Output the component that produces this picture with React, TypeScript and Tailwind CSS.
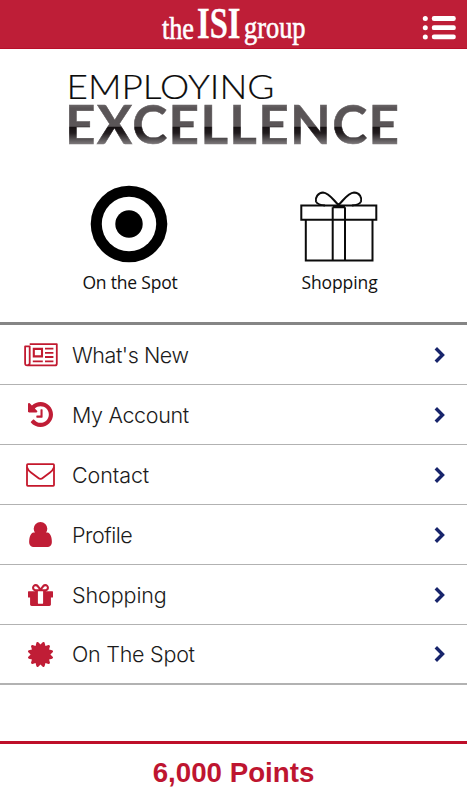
import React from 'react';

type GlyphProps = { box: string; className: string; d: string };

const Glyph = ({ box, className, d }: GlyphProps) => (
  <svg viewBox={box} className={className} fill="#c01d36">
    <path d={d} />
  </svg>
);

const NewsIcon = () => (
  <svg viewBox="0 0 34 24" className="h-6 w-[34px]" fill="none" stroke="#c11a30" strokeLinejoin="round">
    <path strokeWidth="1.8" d="M5.700 1.200H32.800V20.400Q32.800 22.400 31 22.400H3.200Q1.100 22.400 1.100 20.300V3.400H5.700V20Q5.700 22.200 3.400 22.200" />
    <path strokeWidth="2.1" strokeLinejoin="miter" d="M9.800 5.900H18V13.400H9.800Z" />
    <path strokeWidth="1.8" d="M21 5.700H29.400M21 9.900H29.400M21 14H29.400M8.800 18.300H18.800M21 18.300H29.400" />
  </svg>
);

const MailIcon = () => (
  <svg viewBox="0 0 29 24" className="h-6 w-[29px]" fill="none" stroke="#c5182c" strokeWidth="1.8" strokeLinejoin="round">
    <rect x="1" y="1.200" width="27" height="21.700" rx="0.8" />
    <path d="M1 4.200Q2.200 7.400 5 9.500L12 14.800Q14.500 17 17 14.800L24 9.500Q26.800 7.400 28 4.200" />
  </svg>
);

const HISTORY =
  'M1536 896q0 156-61 298t-164 245-245 164-298 61q-172 0-327-72.500t-264-204.500q-7-10-6.500-22.500t8.500-20.500l137-138q10-9 25-9 16 2 23 12 73 95 179 147t225 52q104 0 198.500-40.500t163.500-109.500 109.500-163.500 40.500-198.500-40.500-198.500-109.500-163.500-163.500-109.500-198.500-40.500q-98 0-188 35.500t-160 101.500l137 138q31 30 14 69-17 40-59 40h-448q-26 0-45-19t-19-45v-448q0-42 40-59 39-17 69 14l130 129q107-101 244.500-156.500t284.500-55.500q156 0 298 61t245 164 164 245 61 298zM896 608v448q0 14-9 23t-23 9h-320q-14 0-23-9t-9-23v-64q0-14 9-23t23-9h224v-352q0-14 9-23t23-9h64q14 0 23 9t9 23z';
const USER =
  'M1280 1271q0 109-62.500 187t-150.500 78h-854q-88 0-150.500-78t-62.500-187q0-85 8.500-160.500t31.500-152 58.500-131 94-89 134.500-34.500q131 128 313 128t313-128q76 0 134.500 34.500t94 89 58.500 131 31.500 152 8.500 160.500zM1024 512q0 159-112.500 271.500t-271.500 112.500-271.500-112.500-112.500-271.500 112.500-271.500 271.500-112.500 271.500 112.500 112.500 271.500z';
const GIFT =
  'M928 1356v-716h-320v716q0 25 18 38.500t46 13.500h192q28 0 46-13.500t18-38.500zM472 512h195l-126-161q-26-31-69-31-40 0-68 28t-28 68 28 68 68 28zM1160 416q0-40-28-68t-68-28q-43 0-69 31l-125 161h194q40 0 68-28t28-68zM1536 672v320q0 14-9 23t-23 9h-96v416q0 40-28 68t-68 28h-1088q-40 0-68-28t-28-68v-416h-96q-14 0-23-9t-9-23v-320q0-14 9-23t23-9h440q-93 0-158.500-65.500t-65.500-158.500 65.500-158.500 158.500-65.500q107 0 168 77l128 165 128-165q61-77 168-77 93 0 158.500 65.500t65.500 158.500-65.500 158.500-158.500 65.500h440q14 0 23 9t9 23z';
const BURST =
  'M1376 896l138 135q30 28 20 70-12 41-52 51l-188 48 53 186q12 41-19 70-29 31-70 19l-186-53-48 188q-10 40-51 52-12 2-19 2-31 0-51-22l-135-138-135 138q-28 30-70 20-41-11-51-52l-48-188-186 53q-41 12-70-19-31-29-19-70l53-186-188-48q-40-10-52-51-10-42 20-70l138-135-138-135q-30-28-20-70 12-41 52-51l188-48-53-186q-12-41 19-70 29-31 70-19l186 53 48-188q10-41 51-51 41-12 70 19l135 139 135-139q29-30 70-19 41 10 51 51l48 188 186-53q41-12 70 19 31 29 19 70l-53 186 188 48q40 10 52 51 10 42-20 70z';

const rows = [
  { label: 'What\'s New', icon: <NewsIcon />, track: 'tracking-[-0.45px]' },
  { label: 'My Account', icon: <Glyph box="0 128 1536 1536" className="size-[25px]" d={HISTORY} />, track: 'tracking-[-0.35px]' },
  { label: 'Contact', icon: <MailIcon />, track: 'tracking-[-0.1px]' },
  { label: 'Profile', icon: <Glyph box="0 128 1280 1408" className="h-[25px] w-[23px]" d={USER} />, track: 'tracking-[-0.45px]' },
  { label: 'Shopping', icon: <Glyph box="0 192 1536 1344" className="h-[22px] w-[25px]" d={GIFT} />, track: 'tracking-[-0.1px]' },
  { label: 'On The Spot', icon: <Glyph box="0 128 1536 1536" className="size-[25px]" d={BURST} />, track: 'tracking-[-0.25px]' },
];

const Header = () => (
  <header className="flex h-[49px] justify-between border-b border-[#b80f29] bg-[#be1e37] pr-[11px]">
    <svg viewBox="0 0 310 48" className="h-12 w-[310px] overflow-visible" fill="#fff" stroke="#fff" strokeWidth="0.6" fontFamily="'Liberation Serif', serif">
      <text x="162" y="38.500" fontSize="31" textLength="32" lengthAdjust="spacingAndGlyphs">the</text>
      <text x="197" y="37.500" fontSize="45" fontWeight="700" textLength="43.500" lengthAdjust="spacingAndGlyphs" strokeWidth="0.3">ISI</text>
      <text x="244" y="38" fontSize="31" textLength="61.500" lengthAdjust="spacingAndGlyphs">group</text>
    </svg>
    <svg viewBox="0 0 34 48" className="h-12 w-[34px]" fill="#fff">
      {[18.5, 27.7, 36.9].map((y) => (
        <g key={y}>
          <circle cx="3.300" cy={y} r="2.500" />
          <rect x="9.800" y={y - 2.4} width="24" height="4.800" rx="2.200" />
        </g>
      ))}
    </svg>
  </header>
);

const Banner = () => (
  <svg viewBox="0 0 467 110" className="block h-[110px] w-full shrink-0" fontFamily="Lato, sans-serif">
    <defs>
      <linearGradient id="steel" gradientUnits="userSpaceOnUse" x1="0" y1="56" x2="0" y2="96">
        <stop offset="0" stopColor="#686365" />
        <stop offset="0.08" stopColor="#595456" />
        <stop offset="0.53" stopColor="#5b5658" />
        <stop offset="0.56" stopColor="#171214" />
        <stop offset="0.7" stopColor="#211c1e" />
        <stop offset="1" stopColor="#858183" />
      </linearGradient>
    </defs>
    <text x="66.500" y="49.500" fontSize="34" fontWeight="300" textLength="208" lengthAdjust="spacingAndGlyphs" fill="#0b0b0b" stroke="#0b0b0b" strokeWidth="0.2">EMPLOYING</text>
    <text x="65" y="95" fontSize="53" fontWeight="700" textLength="334" lengthAdjust="spacing" fill="url(#steel)" stroke="url(#steel)" strokeWidth="0.5">EXCELLENCE</text>
  </svg>
);

const Shortcuts = () => (
  <section className="flex h-[163px] shrink-0 pt-[26px] font-['Open_Sans','Noto_Sans',sans-serif] text-[17.5px] leading-6 text-[#111]">
    <div className="ml-[69px] flex w-[122px] flex-col items-center">
      <svg viewBox="0 0 78 78" className="mr-[3px] size-[78px]">
        <circle cx="39" cy="39" r="38.300" />
        <circle cx="39" cy="39" r="27.200" fill="#fff" />
        <circle cx="39" cy="39" r="13.700" />
      </svg>
      <span className="mt-[7px] whitespace-nowrap tracking-[-0.2px]">On the Spot</span>
    </div>
    <div className="ml-[87px] flex w-[123px] flex-col items-center">
      <svg viewBox="0 0 78 78" className="mr-px size-[78px]" fill="none" stroke="#0b0b0b" strokeWidth="2">
        <path d="M1.300 20.500H76.300V34.800H1.300ZM5.800 34.800H72.500V75.500H5.800ZM32.700 22.300V75.500M45 22.300V75.500M32.700 22.300H45" />
        <path d="M39 20.500C33 15 29.500 8 23 7.500C18 7.500 15 13 16 16.500C17 19 20 20 25 20.500M38 20.500C44 15 47.500 8 54 7.500C60 7.500 62 13 61 16.500C60 19 57 20 52 20.500" />
      </svg>
      <span className="mt-[7px] tracking-[-0.1px]">Shopping</span>
    </div>
  </section>
);

export default function App() {
  return (
    <div className="flex h-[800px] w-[467px] flex-col overflow-hidden bg-white">
      <Header />
      <Banner />
      <Shortcuts />
      <nav className="border-t-[3px] border-[#858585]">
        {rows.map((r) => (
          <a key={r.label} className="flex h-[60px] items-center border-b border-[#b2b2b2] last:border-b-2">
            <span className="flex w-[81px] shrink-0 justify-center">{r.icon}</span>
            <span className={`-ml-[9px] grow font-['Inter',sans-serif] text-[21.5px] font-light leading-7 text-[#1b1b1b] ${r.track}`}>{r.label}</span>
            <svg viewBox="0 0 12 18" className="mr-[21px] h-[18px] w-3" fill="none" stroke="#17246b" strokeWidth="3.4">
              <path d="M1.800 2.200L8.500 9L1.800 15.800" />
            </svg>
          </a>
        ))}
      </nav>
      <footer className="mt-auto flex h-[59px] items-center justify-center border-t-[3px] border-[#be0e29] pt-px font-['Liberation_Sans',sans-serif] text-[27.7px] font-bold text-[#be1530]">
        6,000 Points
      </footer>
    </div>
  );
}
